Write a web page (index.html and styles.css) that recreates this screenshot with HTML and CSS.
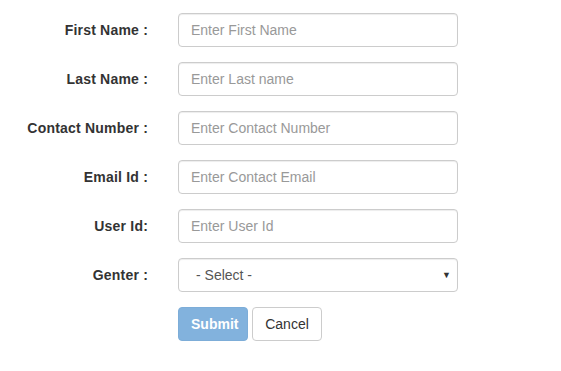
FILE: index.html
```html
<!DOCTYPE html>
<html>
<head>
<meta charset="utf-8">
<link rel="stylesheet" href="styles.css">
</head>
<body>
<form class="form">
  <div class="row"><label class="lbl">First Name :</label><input class="ctl" type="text" placeholder="Enter First Name"></div>
  <div class="row"><label class="lbl">Last Name :</label><input class="ctl" type="text" placeholder="Enter Last name"></div>
  <div class="row"><label class="lbl">Contact Number :</label><input class="ctl" type="text" placeholder="Enter Contact Number"></div>
  <div class="row"><label class="lbl">Email Id :</label><input class="ctl" type="text" placeholder="Enter Contact Email"></div>
  <div class="row"><label class="lbl">User Id:</label><input class="ctl" type="text" placeholder="Enter User Id"></div>
  <div class="row"><label class="lbl">Genter :</label>
    <div class="ctl sel"><span>- Select -</span><span class="caret">&#9660;</span></div>
  </div>
  <div class="row btns"><span class="lbl"></span>
    <div class="btngroup"><button type="button" class="btn primary">Submit</button><button type="button" class="btn plain">Cancel</button></div>
  </div>
</form>
</body>
</html>
```
FILE: styles.css
```css
html, body { margin: 0; padding: 0; background: #fff; }
body { font-family: "Liberation Sans", Arial, sans-serif; font-size: 14px; color: #333; }
.form { padding-top: 13px; display: flex; flex-direction: column; gap: 15px; }
.row { display: grid; grid-template-columns: 148px 280px; column-gap: 30px; align-items: center; }
.lbl { text-align: right; font-weight: bold; font-size: 14px; color: #333; letter-spacing: 0.2px; }
.ctl { box-sizing: border-box; height: 34px; width: 280px; padding: 6px 12px; border: 1px solid #ccc; border-radius: 4px; font-family: inherit; font-size: 14px; color: #555; background: #fff; box-shadow: inset 0 1px 1px rgba(0,0,0,.075); outline: none; }
.ctl::placeholder { color: #999; }
.sel { display: flex; align-items: center; justify-content: space-between; color: #555; padding-left: 17px; padding-right: 6px; }
.caret { font-size: 9px; color: #333; }
.btngroup { display: flex; gap: 4px; }
.btn { box-sizing: border-box; height: 34px; width: 70px; padding: 6px 12px; border-radius: 4px; font-family: inherit; font-size: 14px; border: 1px solid #ccc; }
.primary { background: #82b2dd; border-color: #7dadd8; color: #fff; font-weight: bold; }
.plain { background: #fff; color: #333; }
```
